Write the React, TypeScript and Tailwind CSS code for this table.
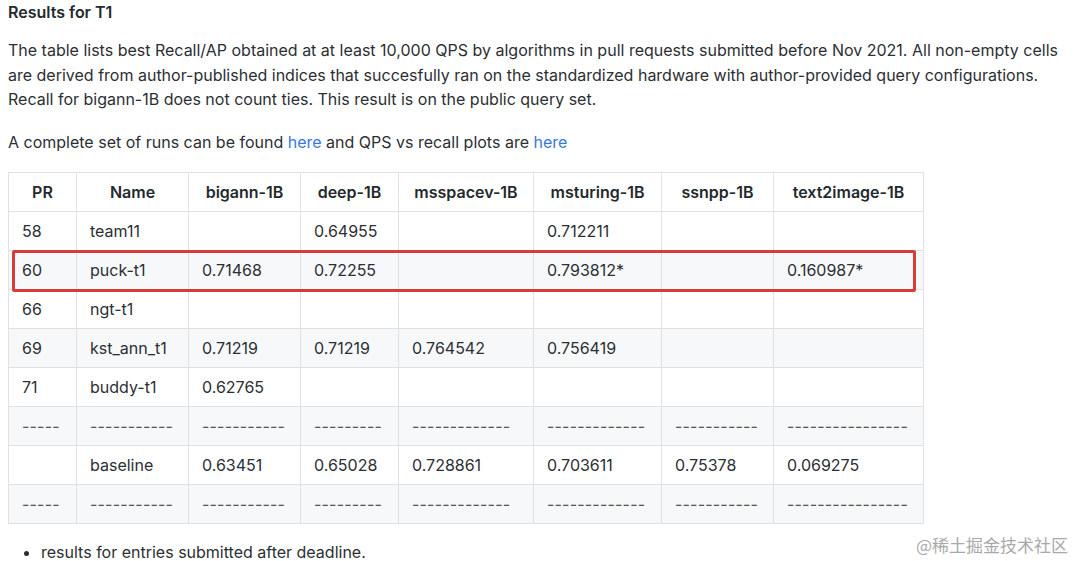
import React from 'react';

const columns = [
  { key: 'pr', label: 'PR', width: 'w-[68px]' },
  { key: 'name', label: 'Name', width: 'w-[112px]' },
  { key: 'bigann', label: 'bigann-1B', width: 'w-[112px]' },
  { key: 'deep', label: 'deep-1B', width: 'w-[98px]' },
  { key: 'msspacev', label: 'msspacev-1B', width: 'w-[135px]' },
  { key: 'msturing', label: 'msturing-1B', width: 'w-[128px]' },
  { key: 'ssnpp', label: 'ssnpp-1B', width: 'w-[112px]' },
  { key: 'text2image', label: 'text2image-1B', width: 'w-[150px]' },
];

const dashes = ['-----', '-----------', '-----------', '---------', '-------------', '-------------', '-----------', '----------------'];

const rows: { cells: string[]; dash?: boolean }[] = [
  { cells: ['58', 'team11', '', '0.64955', '', '0.712211', '', ''] },
  { cells: ['60', 'puck-t1', '0.71468', '0.72255', '', '0.793812*', '', '0.160987*'] },
  { cells: ['66', 'ngt-t1', '', '', '', '', '', ''] },
  { cells: ['69', 'kst_ann_t1', '0.71219', '0.71219', '0.764542', '0.756419', '', ''] },
  { cells: ['71', 'buddy-t1', '0.62765', '', '', '', '', ''] },
  { cells: dashes, dash: true },
  { cells: ['', 'baseline', '0.63451', '0.65028', '0.728861', '0.703611', '0.75378', '0.069275'] },
  { cells: dashes, dash: true },
];

export default function App() {
  return (
    <div
      className="relative w-[1080px] h-[561px] overflow-hidden bg-white text-[#2b2f33] px-2"
      style={{ fontFamily: 'Inter, "Liberation Sans", Arial, sans-serif' }}
    >
      <h3 className="text-[16px] font-semibold leading-6 text-[#24292e]">Results for T1</h3>

      <p className="mt-[14px] text-[16px] leading-[24.5px]">
        The table lists best Recall/AP obtained at at least 10,000 QPS by algorithms in pull requests submitted before Nov 2021. All non-empty cells
        <br />
        are derived from author-published indices that succesfully ran on the standardized hardware with author-provided query configurations.
        <br />
        Recall for bigann-1B does not count ties. This result is on the public query set.
      </p>

      <p className="mt-[18px] text-[16px] leading-6">
        A complete set of runs can be found <a className="text-[#3a78dc]">here</a> and QPS vs recall plots are{' '}
        <a className="text-[#3a78dc]">here</a>
      </p>

      <div className="relative mt-[18px] w-[915px]">
        <table className="w-[915px] table-fixed border-collapse text-[16px] leading-6">
          <thead>
            <tr className="bg-white">
              {columns.map((c) => (
                <th
                  key={c.key}
                  className={`${c.width} border border-[#dfe2e5] px-[13px] py-[7px] text-center font-semibold text-[#24292e]`}
                >
                  {c.label}
                </th>
              ))}
            </tr>
          </thead>
          <tbody>
            {rows.map((r, i) => (
              <tr key={i} className={i % 2 === 1 ? 'bg-[#f6f8fa]' : 'bg-white'}>
                {r.cells.map((v, j) => (
                  <td
                    key={j}
                    className={`border border-[#dfe2e5] px-[13px] py-[7px] whitespace-nowrap ${
                      r.dash ? 'tracking-[0.2px] text-[#555]' : ''
                    }`}
                  >
                    {v}
                  </td>
                ))}
              </tr>
            ))}
          </tbody>
        </table>

        {/* highlight around the puck-t1 row */}
        <div className="absolute left-[4px] top-[78px] h-[42px] w-[904px] rounded-[2px] border-[3px] border-[#d93a3a]" />
      </div>

      <ul className="mt-[16px] list-disc pl-[33px] text-[16px] leading-6">
        <li>results for entries submitted after deadline.</li>
      </ul>

      <div
        className="absolute right-[12px] bottom-[4px] text-[17px] leading-6 text-[#a9a9a9]"
        style={{ fontFamily: '"Noto Sans CJK SC", sans-serif' }}
      >
        @稀土掘金技术社区
      </div>
    </div>
  );
}
